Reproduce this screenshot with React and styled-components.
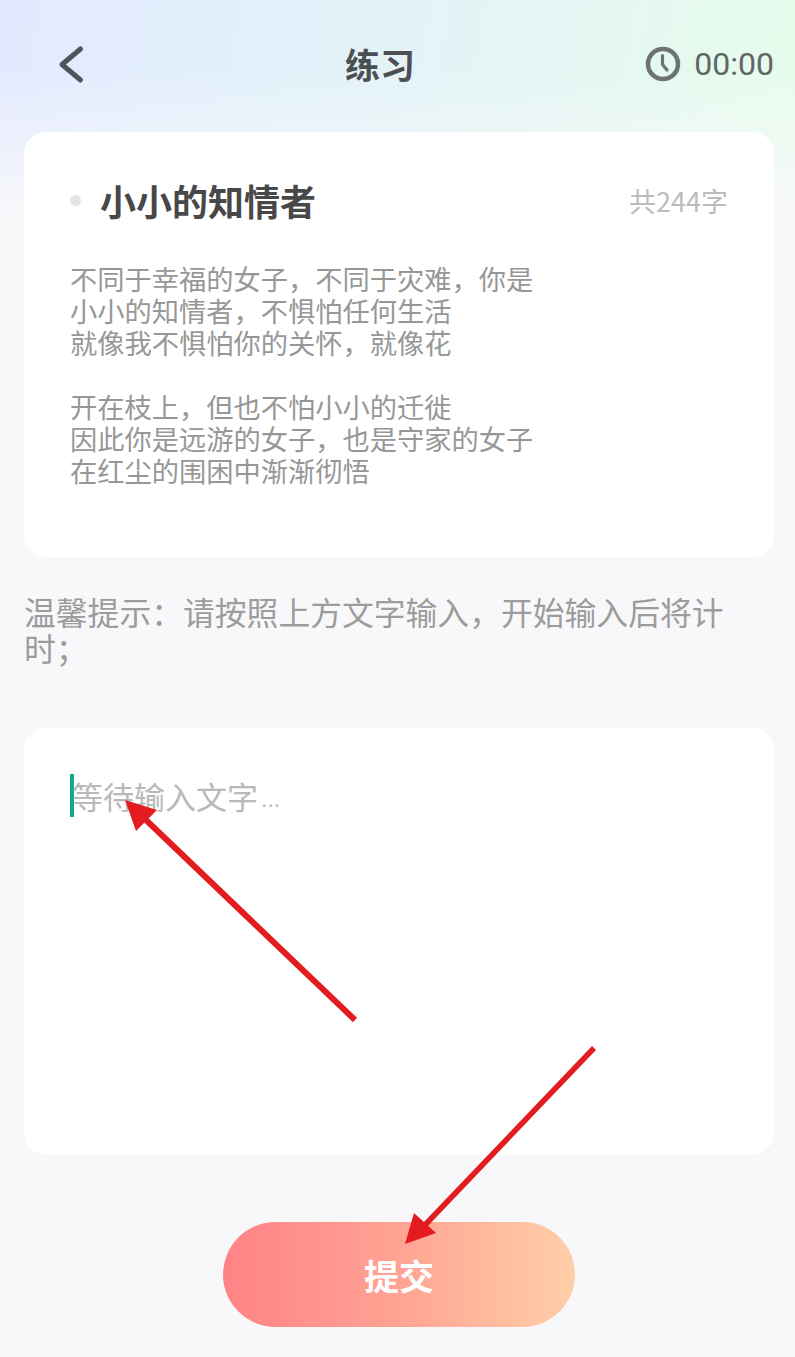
import React from "react";
import styled, { createGlobalStyle } from "styled-components";

const CJK = `"Noto Sans CJK SC", "Noto Sans", sans-serif`;

const GlobalStyle = createGlobalStyle`
  html, body {
    margin: 0;
    padding: 0;
    background: #f8f8fb;
  }
  * {
    box-sizing: border-box;
  }
`;

const Page = styled.div`
  position: relative;
  width: 795px;
  height: 1357px;
  overflow: hidden;
  padding: 0 21px 0 24px;
  font-family: ${CJK};
  background:
    linear-gradient(to bottom, rgba(248, 248, 251, 0) 0, rgba(248, 248, 251, 0) 70px, #f8f8fb 215px),
    linear-gradient(100deg, #e3e9ff 0%, #e2f1fa 35%, #e4f5f4 65%, #e6fdeb 100%);
  background-repeat: no-repeat;
  background-size: 100% 100%, 100% 215px;
`;

const Header = styled.header`
  display: grid;
  grid-template-columns: 287px auto 1fr;
  align-items: center;
  height: 132px;
  padding: 0 0 4px 34px;
`;

const BackButton = styled.button`
  display: flex;
  width: 30px;
  padding: 0;
  border: 0;
  background: none;
`;

const Title = styled.h1`
  margin: 0;
  font-size: 35px;
  font-weight: 700;
  line-height: 44px;
  color: #4d5053;
`;

const Timer = styled.div`
  display: flex;
  justify-content: flex-end;
  align-items: center;
  gap: 13px;
  font-family: Roboto, sans-serif;
  font-size: 32px;
  color: #5f6664;
`;

const Card = styled.section`
  height: ${(p) => p.$height}px;
  padding: ${(p) => p.$pad};
  border-radius: 22px;
  background: #fff;
`;

const CardHead = styled.div`
  display: flex;
  align-items: center;
  justify-content: space-between;
  height: 54px;
  padding-right: 46px;
`;

const PoemTitle = styled.h2`
  display: flex;
  align-items: center;
  gap: 19px;
  margin: 0;
  font-size: 36px;
  font-weight: 700;
  color: #484848;

  &::before {
    content: "";
    width: 11px;
    height: 11px;
    border-radius: 50%;
    background: #e4e4e4;
  }
`;

const WordCount = styled.span`
  font-size: 27px;
  color: #bcbcbc;
`;

const Poem = styled.div`
  margin-top: 35px;
  display: flex;
  flex-direction: column;
  gap: 32px;
`;

const Stanza = styled.p`
  margin: 0;
  font-size: 27.25px;
  line-height: 32px;
  color: #979797;
`;

const Hint = styled.p`
  margin: 36px 0 0;
  height: 135px;
  font-size: 31.8px;
  line-height: 36px;
  color: #9c9c9c;
`;

const Placeholder = styled.div`
  display: flex;
  align-items: center;
  height: 43px;
  font-size: 31px;
  line-height: 43px;
  color: #b9b9b9;
`;

const Caret = styled.span`
  flex: none;
  width: 4px;
  height: 43px;
  margin-right: -2px;
  background: #12a98f;
`;

const Dots = styled.span`
  font-family: "Liberation Sans", sans-serif;
  font-size: 23px;
  margin: 8px 0 0 3px;
`;

const SubmitRow = styled.div`
  display: flex;
  justify-content: center;
  margin-top: 67px;
`;

const SubmitButton = styled.button`
  width: 352px;
  height: 105px;
  border: 0;
  border-radius: 53px;
  font-family: ${CJK};
  font-size: 35px;
  font-weight: 700;
  color: #fff;
  background: linear-gradient(90deg, #ff8285 0%, #ffa394 50%, #ffcfa8 100%);
`;

const ArrowLayer = styled.svg`
  position: absolute;
  left: 0;
  top: 0;
  pointer-events: none;
`;

const App = () => (
  <Page>
    <GlobalStyle />
    <Header>
      <BackButton aria-label="返回">
        <svg width="30" height="40" viewBox="0 0 30 40" fill="none">
          <path d="M22.5 5 L4 20.5 L22.5 36" stroke="#4f5458" strokeWidth="5" strokeLinecap="round" strokeLinejoin="round" />
        </svg>
      </BackButton>
      <Title>练习</Title>
      <Timer>
        <svg width="36" height="36" viewBox="0 0 36 36" fill="none">
          <circle cx="18" cy="18" r="15" stroke="#6d7371" strokeWidth="4.5" />
          <path d="M17.5 9.5 V18.5 L22 24" stroke="#6d7371" strokeWidth="3.2" strokeLinecap="round" strokeLinejoin="round" />
        </svg>
        00:00
      </Timer>
    </Header>

    <Card $height={425} $pad="41px 0 0 46px">
      <CardHead>
        <PoemTitle>小小的知情者</PoemTitle>
        <WordCount>共244字</WordCount>
      </CardHead>
      <Poem>
        <Stanza>
          不同于幸福的女子，不同于灾难，你是
          <br />
          小小的知情者，不惧怕任何生活
          <br />
          就像我不惧怕你的关怀，就像花
        </Stanza>
        <Stanza>
          开在枝上，但也不怕小小的迁徙
          <br />
          因此你是远游的女子，也是守家的女子
          <br />
          在红尘的围困中渐渐彻悟
        </Stanza>
      </Poem>
    </Card>

    <Hint>温馨提示：请按照上方文字输入，开始输入后将计时；</Hint>

    <Card $height={427} $pad="46px 0 0 46px">
      <Placeholder>
        <Caret />
        等待输入文字<Dots>...</Dots>
      </Placeholder>
    </Card>

    <SubmitRow>
      <SubmitButton>提交</SubmitButton>
    </SubmitRow>

    <ArrowLayer width="795" height="1357" viewBox="0 0 795 1357">
      <path d="M355 1020 L146 820" stroke="#e31c1f" strokeWidth="6" />
      <path d="M125 800 L157 810 L136 831 Z" fill="#e31c1f" />
      <path d="M594 1048 L424 1226" stroke="#e31c1f" strokeWidth="5.5" />
      <path d="M405 1244 L414 1213 L436 1233 Z" fill="#e31c1f" />
    </ArrowLayer>
  </Page>
);

export default App;
